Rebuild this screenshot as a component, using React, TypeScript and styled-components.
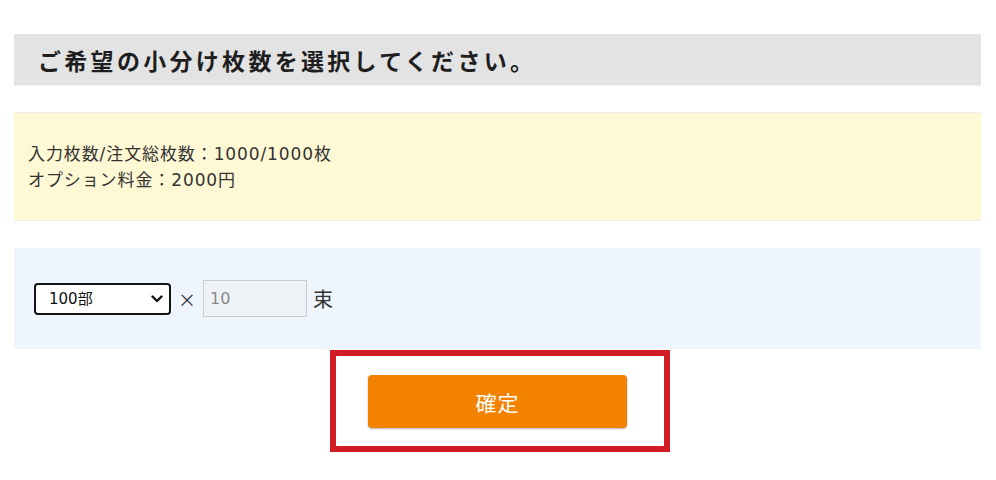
import React from "react";
import styled, { createGlobalStyle } from "styled-components";

const Global = createGlobalStyle`
  html, body { margin: 0; padding: 0; background: #ffffff; }
  body { font-family: "DejaVu Sans", "Noto Sans CJK JP", sans-serif; color: #333333; }
`;

const Page = styled.div`
  width: 967px;
  margin: 0 14px;
  padding-top: 34px;
`;

const Heading = styled.h2`
  margin: 0;
  height: 52px;
  background: #e3e3e3;
  border-bottom: 1px solid #f0f0f0;
  box-sizing: border-box;
  display: flex;
  align-items: center;
  padding-left: 24px;
  font-family: "Noto Sans CJK JP", sans-serif;
  font-size: 23px;
  font-weight: 700;
  letter-spacing: 3.3px;
  color: #1e1e1e;
`;

const InfoBox = styled.div`
  margin-top: 26px;
  background: #fff8d4;
  border-top: 1px solid #ececec;
  border-bottom: 1px solid #ececec;
  height: 109px;
  box-sizing: border-box;
  padding: 28px 0 0 14px;
  font-family: "DejaVu Sans", "Noto Sans CJK JP", sans-serif;
  font-size: 17px;
  letter-spacing: 0.9px;
  line-height: 26px;
  color: #333333;
`;

const InfoLine = styled.div``;

const SelectBox = styled.div`
  margin-top: 27px;
  background: #eef5fc;
  height: 101px;
  display: flex;
  align-items: center;
  padding-left: 20px;
`;

const SelectWrap = styled.div`
  position: relative;
  width: 137px;
  height: 32px;
`;

const Select = styled.select`
  appearance: none;
  width: 137px;
  height: 32px;
  border: 2px solid #141414;
  border-radius: 4px;
  background: #ffffff;
  box-sizing: border-box;
  padding: 0 0 0 13px;
  font-family: "DejaVu Sans", "Noto Sans CJK JP", sans-serif;
  font-size: 15px;
  color: #111111;
  outline: none;
`;

const Chevron = styled.svg`
  position: absolute;
  right: 8px;
  top: 11px;
  pointer-events: none;
`;

const Times = styled.span`
  margin: 0 7px 0 7px;
  font-size: 18px;
  color: #333333;
  font-family: "Noto Sans CJK JP", sans-serif;
`;

const NumInput = styled.input`
  width: 104px;
  height: 37px;
  box-sizing: border-box;
  border: 1px solid #cccccc;
  background: #eef2f6;
  padding: 0 0 0 6px;
  font-family: "DejaVu Sans", sans-serif;
  font-size: 16px;
  color: #888888;
  outline: none;
`;

const Unit = styled.span`
  margin-left: 6px;
  font-family: "Noto Sans CJK JP", sans-serif;
  font-size: 20px;
  color: #333333;
`;

const ButtonFrame = styled.div`
  margin: 1px 0 0 316px;
  width: 340px;
  height: 102px;
  box-sizing: border-box;
  border: 6px solid #d21c24;
  padding: 19px 0 0 32px;
`;

const ConfirmButton = styled.button`
  width: 259px;
  height: 53px;
  border: none;
  border-radius: 4px;
  background: #f38200;
  box-shadow: 0 1px 2px rgba(0, 0, 0, 0.3);
  color: #ffffff;
  font-family: "Noto Sans CJK JP", sans-serif;
  font-size: 21px;
  letter-spacing: 1px;
  cursor: pointer;
`;

export default function App() {
  return (
    <>
      <Global />
      <Page>
        <Heading>ご希望の小分け枚数を選択してください。</Heading>
        <InfoBox>
          <InfoLine>入力枚数/注文総枚数：1000/1000枚</InfoLine>
          <InfoLine>オプション料金：2000円</InfoLine>
        </InfoBox>
        <SelectBox>
          <SelectWrap>
            <Select defaultValue="100">
              <option value="100">100部</option>
              <option value="50">50部</option>
            </Select>
            <Chevron width="12" height="10" viewBox="0 0 12 10">
              <path d="M1.5 2.5 L6 7 L10.5 2.5" fill="none" stroke="#111" strokeWidth="2.4" strokeLinecap="round" strokeLinejoin="round" />
            </Chevron>
          </SelectWrap>
          <Times>×</Times>
          <NumInput defaultValue="10" />
          <Unit>束</Unit>
        </SelectBox>
        <ButtonFrame>
          <ConfirmButton>確定</ConfirmButton>
        </ButtonFrame>
      </Page>
    </>
  );
}
